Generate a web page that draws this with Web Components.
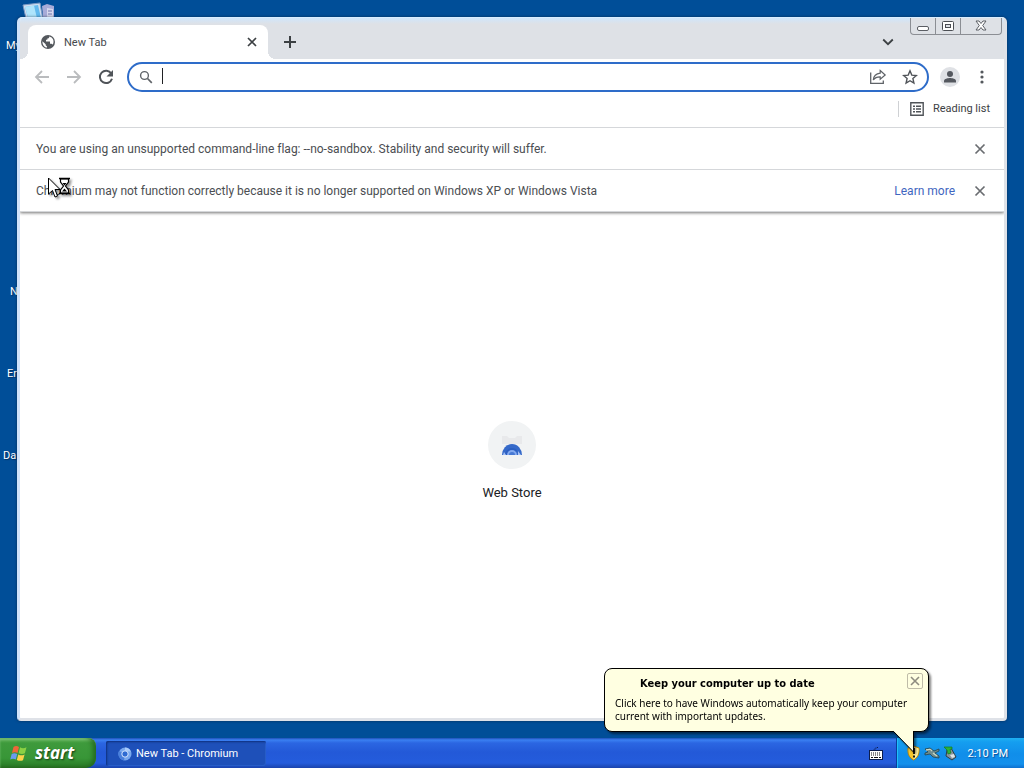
<!DOCTYPE html>
<html lang="en">
<head>
<meta charset="utf-8">
<title>Desktop</title>
<style>
html, body { margin: 0; padding: 0; }
body { min-height: 100vh; background: #004e98; font-family: Roboto, "Liberation Sans", sans-serif; font-size: 12px; line-height: 16px; overflow: hidden; }
</style>
</head>
<body>
<xp-desktop></xp-desktop>
<script>
const reset = `
  *, *::before { box-sizing: border-box; }
  button { appearance: none; border: 0; margin: 0; padding: 0; background: none; font: inherit; color: inherit; display: flex; align-items: center; justify-content: center; outline: none; }
  svg { display: block; flex: none; }
`;
function define(name, css, html) {
  const template = document.createElement('template');
  template.innerHTML = `<style>${reset}:host { box-sizing: border-box; }${css}</style>${html}`;
  customElements.define(name, class extends HTMLElement {
    constructor() {
      super();
      this.attachShadow({ mode: 'open' }).append(template.content.cloneNode(true));
    }
  });
}

define('desktop-label', `
  :host { display: block; position: absolute; color: #fff; font-size: 11px; line-height: 16px; text-shadow: 1px 1px 1px #00305f; white-space: nowrap; }
`, `<slot></slot>`);

define('caption-buttons', `
  :host { display: flex; border: 1px solid #8b8e94; border-top: 0; border-radius: 0 0 4px 4px; background: #dee1e6; height: 17px; overflow: hidden; }
  button { width: 24px; height: 16px; }
  button + button { width: 25px; border-left: 1px solid #8b8e94; }
  button:last-child { width: 41px; }
`, `
  <button aria-label="Minimize"><svg width="14" height="16" viewBox="0 0 14 16"><rect x="1.500" y="8.500" width="11" height="4" rx="1.500" fill="#fff" stroke="#5b5e64"/></svg></button>
  <button aria-label="Maximize"><svg width="14" height="16" viewBox="0 0 14 16"><rect x="1.500" y="3.500" width="11" height="9" rx="1" fill="#fff" stroke="#4b4e54"/><rect x="4.500" y="6.500" width="5" height="3" fill="#dee1e6" stroke="#4b4e54"/></svg></button>
  <button aria-label="Close"><svg width="14" height="16" viewBox="0 0 14 16"><path d="M2 3h3l2 2.500L9 3h3L8.700 7.500 12 12H9L7 9.500 5 12H2l3.300-4.500z" fill="#fff" stroke="#5b5e64"/></svg></button>
`);

define('browser-tab', `
  :host { display: flex; align-items: center; position: relative; width: 240px; height: 34px; padding: 0 8px 0 13px; background: #fff; border-radius: 8px 8px 0 0; color: #45494d; font-size: 11px; }
  :host::before, :host::after { content: ""; position: absolute; bottom: 0; width: 8px; height: 8px; }
  :host::before { left: -8px; background: radial-gradient(circle at 0 0, transparent 8px, #fff 8px); }
  :host::after { right: -8px; background: radial-gradient(circle at 100% 0, transparent 8px, #fff 8px); }
  span { flex: 1; padding: 2px 0 0 9px; }
  button { width: 16px; height: 16px; }
`, `
  <svg width="14" height="14" viewBox="0 0 14 14"><circle cx="7" cy="7" r="7" fill="#54585d"/><path d="M1.400 6.200 4.700 9.300v1L6 11.400v1.200C3 12.200 1.300 9.500 1.400 6.200zM8.300 1.500c0 1.400-.7 2-2 2v1.300H5V6.500h4v2.300h1.400c.6 0 1 .4 1.300 1 1.500-2.500 1-6.300-1.700-7.600z" fill="#fff"/></svg>
  <span><slot></slot></span>
  <button aria-label="Close tab"><svg width="10" height="10" viewBox="0 0 10 10"><path d="M1 1l8 8M9 1L1 9" stroke="#3c4043" stroke-width="1.700"/></svg></button>
`);

define('tab-strip', `
  :host { display: flex; align-items: flex-start; height: 41px; padding: 0 2px 0 8px; background: linear-gradient(#cfe6fc, #dee1e6 6px); }
  browser-tab { margin-top: 7px; }
  .plus { width: 28px; height: 34px; margin: 7px 0 0 8px; }
  .search { width: 28px; height: 34px; margin: 7px 8px 0 auto; }
`, `
  <browser-tab>New Tab</browser-tab>
  <button class="plus" aria-label="New tab"><svg width="14" height="14" viewBox="0 0 14 14"><path d="M7 1v12M1 7h12" stroke="#3c4043" stroke-width="2"/></svg></button>
  <button class="search" aria-label="Search tabs"><svg width="12" height="8" viewBox="0 0 12 8"><path d="M1.200 1.500 6 6.200l4.800-4.700" fill="none" stroke="#3c4043" stroke-width="1.800"/></svg></button>
  <caption-buttons></caption-buttons>
`);

define('address-box', `
  :host { display: flex; align-items: center; flex: 1; min-width: 0; height: 30px; border: 2px solid #2e6cc9; border-radius: 15px; background: #fff; padding: 0 1px 0 10px; }
  .caret { width: 1px; height: 16px; margin: 0 0 2px 9px; background: #202124; }
  input { flex: 1; min-width: 0; height: 24px; border: 0; padding: 0; outline: 0; background: none; font: inherit; caret-color: transparent; }
  button { width: 32px; height: 26px; }
`, `
  <svg width="14" height="14" viewBox="0 0 14 14"><circle cx="5.500" cy="5.500" r="3.900" fill="none" stroke="#5f6368" stroke-width="1.400"/><path d="M8.500 8.500l4.300 4.300" stroke="#5f6368" stroke-width="1.700"/></svg>
  <span class="caret"></span><input type="text" aria-label="Address and search bar">
  <button aria-label="Share this page"><svg width="18" height="16" viewBox="0 0 18 16"><path d="M1.700 3.500v10.800h12.600V11.500" fill="none" stroke="#5f6368" stroke-width="1.300"/><path d="M11.200 1.500l5 4.500-5 4.300V7.800C7.800 7.700 5.800 8.700 4.300 11c.3-3.500 2.700-6.300 6.900-6.800z" fill="none" stroke="#5f6368" stroke-width="1.200"/></svg></button>
  <button aria-label="Bookmark this tab"><svg width="16" height="16" viewBox="0 0 16 16"><path d="M8 1.800l1.800 4.300 4.600.4-3.500 3 1 4.600L8 11.700l-3.900 2.400 1-4.600-3.500-3 4.600-.4z" fill="none" stroke="#505459" stroke-width="1.400"/></svg></button>
`);

define('tool-bar', `
  :host { display: flex; align-items: center; height: 36px; padding: 0 6px; background: #fff; }
  button { width: 32px; height: 32px; }
  address-box { margin: 0 5px; }
  .face { width: 20px; height: 20px; border-radius: 50%; background: #dfe1e5; display: flex; justify-content: center; align-items: center; }
`, `
  <button aria-label="Back"><svg width="16" height="14" viewBox="0 0 16 14"><path d="M15 7H2M8 1L2 7l6 6" fill="none" stroke="#babcbe" stroke-width="1.800"/></svg></button>
  <button aria-label="Forward"><svg width="16" height="14" viewBox="0 0 16 14"><path d="M1 7h13M8 1l6 6-6 6" fill="none" stroke="#babcbe" stroke-width="1.800"/></svg></button>
  <button aria-label="Reload"><svg width="16" height="16" viewBox="0 0 16 16"><path d="M13.300 4.500A6.200 6.200 0 1 0 14 9.800" fill="none" stroke="#505459" stroke-width="2"/><path d="M15 1v6.500H8.500z" fill="#505459"/></svg></button>
  <address-box></address-box>
  <button aria-label="Profile"><span class="face"><svg width="14" height="14" viewBox="0 0 14 14"><circle cx="7" cy="4" r="3" fill="#54585f"/><path d="M1 12.500V11c0-2.200 4-3 6-3s6 .8 6 3v1.500z" fill="#54585f"/></svg></span></button>
  <button aria-label="Menu"><svg width="4" height="14" viewBox="0 0 4 14" fill="#54585d"><circle cx="2" cy="2" r="1.600"/><circle cx="2" cy="7" r="1.600"/><circle cx="2" cy="12" r="1.600"/></svg></button>
`);

define('bookmark-bar', `
  :host { display: flex; align-items: center; justify-content: flex-end; height: 33px; padding: 0 14px 4px 0; background: #fff; border-bottom: 1px solid #d5d7da; color: #3c4043; font-size: 11px; }
  .rule { width: 1px; height: 16px; margin-right: 11px; background: #cfd1d4; }
  button { gap: 9px; }
`, `
  <span class="rule"></span>
  <button><svg width="14" height="14" viewBox="0 0 14 14"><path d="M.8.800h12.400v12.400H.8z" fill="none" stroke="#505459" stroke-width="1.400"/><path d="M3 4.200h2M6 4.200h5M3 7h2M6 7h5M3 9.800h2M6 9.800h5" stroke="#505459" stroke-width="1.500"/></svg>Reading list</button>
`);

define('info-bar', `
  :host { display: flex; align-items: center; height: 42px; padding: 0 16px; background: #fff; border-bottom: 1px solid #d5d7da; color: #4b4e52; font-variant-ligatures: none; }
  span { flex: 1; }
  button { width: 16px; height: 16px; margin-left: 17px; }
  ::slotted(a) { color: #3f66c0; text-decoration: none; }
`, `
  <span><slot></slot></span>
  <slot name="action"></slot>
  <button aria-label="Dismiss"><svg width="12" height="12" viewBox="0 0 12 12"><path d="M1.500 1.500l9 9M10.500 1.500l-9 9" stroke="#6a6d71" stroke-width="1.700"/></svg></button>
`);

define('shortcut-tile', `
  :host { display: flex; }
  a { display: flex; flex-direction: column; align-items: center; gap: 16px; color: #202124; text-decoration: none; font-size: 13px; line-height: 16px; }
  .disc { width: 48px; height: 48px; border-radius: 50%; background: #f1f3f4; display: flex; align-items: center; justify-content: center; }
`, `
  <a href="#store"><span class="disc"><svg width="24" height="24" viewBox="0 0 24 24"><path d="M2 3h5l2 2h6l2-2h5v8H2z" fill="#e8e9eb"/><path d="M2 22a10 11 0 0 1 20 0z" fill="#3569c9"/><path d="M5 22c1-7 8-9 12-5l-2 5z" fill="#2b5fc2"/><path d="M7 22a5 5 0 0 1 10 0z" fill="#84aaf0"/><path d="M9 22a3 3 0 0 1 6 0z" fill="#4779d4"/><path d="M4 19l2 3H3zM18 18l3 4h-3z" fill="#a9c3f5"/></svg></span><slot></slot></a>
`);

define('browser-window', `
  :host { display: flex; flex-direction: column; flex: 1; position: relative; border: solid #dfe2e8; border-width: 1px 3px 3px; border-left-color: #cfe3fb; border-top-color: #d8edff; border-radius: 5px 5px 4px 4px; background: #fff; box-shadow: 0 0 3px rgba(10, 25, 45, .6); overflow: hidden; }
  header { position: relative; box-shadow: 0 1px 3px rgba(0, 0, 0, .55); }
  main { flex: 1; display: flex; align-items: center; justify-content: center; padding-bottom: 9px; }
`, `
  <header>
    <tab-strip></tab-strip>
    <tool-bar></tool-bar>
    <bookmark-bar></bookmark-bar>
    <info-bar>You are using an unsupported command-line flag: --no-sandbox. Stability and security will suffer.</info-bar>
    <info-bar>Chromium may not function correctly because it is no longer supported on Windows XP or Windows Vista<a slot="action" href="#learn">Learn more</a></info-bar>
  </header>
  <main><shortcut-tile>Web Store</shortcut-tile></main>
`);

define('balloon-tip', `
  :host { display: block; position: absolute; right: 95px; bottom: 36px; width: 325px; height: 64px; padding: 8px 10px; border: 1px solid #000; border-radius: 8px; background: #ffffe1; color: #000; filter: drop-shadow(2px 2px 1px rgba(0, 0, 0, .5)); }
  h2 { margin: 0 0 6px; padding-left: 25px; font: bold 11px/14px "DejaVu Sans Condensed", "DejaVu Sans", sans-serif; }
  p { margin: 0; font: 10px/13px "Noto Sans", sans-serif; white-space: nowrap; }
  button { position: absolute; right: 5px; top: 4px; width: 16px; height: 16px; border: 1px solid #bfbca8; border-radius: 2px; }
  .tail { position: absolute; right: 13px; top: 61px; }
`, `
  <h2>Keep your computer up to date</h2>
  <p>Click here to have Windows automatically keep your computer<br>current with important updates.</p>
  <button aria-label="Close"><svg width="10" height="10" viewBox="0 0 10 10"><path d="M1 1l8 8M9 1L1 9" stroke="#8e8c80" stroke-width="1.600"/></svg></button>
  <svg class="tail" width="22" height="24" viewBox="0 0 22 24"><path d="M0 0h20.500v22L1 1.500z" fill="#ffffe1"/><path d="M.5 1.500 20.500 22V1" fill="none" stroke="#000"/></svg>
`);

define('start-button', `
  :host { display: flex; }
  button { width: 96px; height: 30px; padding: 0 0 0 10px; justify-content: flex-start; gap: 6px; color: #fff; font: italic bold 17px/24px "Open Sans", "Noto Sans", sans-serif; text-shadow: 1px 1px 2px #163d12; border-radius: 0 8px 10px 0; background: linear-gradient(#6cba62, #3e9a3c 5px, #389637 20px, #2c8029 27px, #27691f); box-shadow: inset -5px 0 5px -2px #22681e, inset 0 2px 2px #7cc478; }
`, `
  <button><svg width="19" height="18" viewBox="0 0 19 18"><path d="M3.500 3Q6 1 9 3L7.500 9Q5 7.300 2 9z" fill="#f0663a"/><path d="M10 3.300q3 1.700 6.500 0l-1.600 6q-3 1.500-6.300-.1z" fill="#8bd044"/><path d="M1.700 10Q4.300 8.400 7.200 10l-1.400 5.500q-2.800-1.600-5.600 0z" fill="#6a9bf0"/><path d="M8.300 10.400q3 1.700 6.300 0L13 16.200q-3 1.400-6.200-.2z" fill="#fbd24a"/></svg>start</button>
`);

define('system-tray', `
  :host { display: flex; align-items: center; width: 128px; height: 30px; padding: 0 16px 0 9px; border-left: 1px solid #0a3f9c; background: linear-gradient(#1fb0f2, #159ef0 4px, #108eea 16px, #1390ec 26px, #0e70cf); box-shadow: inset 1px 0 #1fc0fa; color: #fff; font-size: 11px; }
  svg { margin-right: 3px; }
  time { margin-left: auto; padding-top: 2px; text-shadow: 1px 1px 1px #0a5098; }
`, `
  <svg width="15" height="16" viewBox="0 0 15 16"><path d="M7.500 1 13 3c.5 6-1 9.500-5.500 12C3 12.500 1.500 9 2 3z" fill="#f9c92b" stroke="#b98308"/><path d="M7.500 1.500 12.500 3.500c.3 5-1 8.500-5 11z" fill="#fff09a"/><path d="M7 3h2v6H7zM7 10.500h2v2H7z" fill="#1c1c10"/></svg>
  <svg width="16" height="16" viewBox="0 0 16 16"><path d="M1 4l5-1 4 3 5-2v2l-4 2 4 3v2l-6-1-3-3-5 1V8l3-1z" fill="#6f8c8d" stroke="#24454c" stroke-width=".8"/><path d="M2 5l4-.5L8 6M9 8l4 3" stroke="#cbd9c4" stroke-width="1.300"/></svg>
  <svg width="15" height="16" viewBox="0 0 15 16"><path d="M4 5l4-2 5 9-4 3-6-4z" fill="#88939a" stroke="#2c3d46"/><path d="M7 10l4-1 1 3-3 1z" fill="#dce3e6"/><path d="M1 2h8v2L7 4.500 8 8l-3 1-1-4z" fill="#2bb33a" stroke="#117a20" stroke-width=".7"/></svg>
  <time>2:10 PM</time>
`);

define('task-bar', `
  :host { display: flex; align-items: center; position: relative; height: 30px; background: linear-gradient(#1f50b8, #3a80f2 2px, #2b66e2 5px, #2359d8 14px, #245cdc 25px, #1a43ac); color: #fff; font-size: 11px; }
  .task { width: 160px; height: 25px; margin-left: 10px; padding: 2px 12px 0; gap: 4px; justify-content: flex-start; border-radius: 2px; background: #1e50b9; box-shadow: inset 1px 1px 2px #0e2f7c, inset -1px -1px #2a60cc; }
  .keys { margin: 0 13px 0 auto; }
`, `
  <start-button></start-button>
  <button class="task"><svg width="14" height="14" viewBox="0 0 14 14"><circle cx="7" cy="7" r="6.500" fill="#79a8ee"/><path d="M7 7 1 4A6.500 6.500 0 0 0 6 13.400z" fill="#4a80dc"/><path d="M7 .5A6.500 6.500 0 0 1 13 4.500H7z" fill="#a8cbfb"/><circle cx="7" cy="7" r="3.200" fill="#2f6bd2" stroke="#d9e8ff"/></svg>New Tab - Chromium</button>
  <svg class="keys" width="14" height="14" viewBox="0 0 14 14"><path d="M5 4.500V3h2V1.500h3" fill="none" stroke="#0a1c50" stroke-dasharray="1 1"/><rect x=".5" y="4.500" width="13" height="9" fill="#fff" stroke="#0b1d4d"/><path d="M2 7h10M2 9h10" stroke="#111" stroke-dasharray="1 1"/><path d="M2 11.500h2M5 11.500h4M10 11.500h2" stroke="#111"/></svg>
  <system-tray></system-tray>
`);

define('busy-pointer', `
  :host { display: block; position: absolute; left: 48px; top: 177px; filter: drop-shadow(2px 2px 1px rgba(0, 0, 0, .4)); pointer-events: none; }
`, `
  <svg width="24" height="22" viewBox="0 0 24 22"><path d="M.5 1v16l4-3.500L7 20l2.500-1L7 12.500h5z" fill="#fff" stroke="#000"/><path d="M12.500 2h8v3l-3 4 3 4v3h-8v-3l3-4-3-4z" fill="#fff" stroke="#000" stroke-width="1.200"/><path d="M11 1.500h11M11 16.500h11" stroke="#000" stroke-width="1.600"/><path d="M14.500 6h4l-2 2.500zM16.500 11.500 19 14.500h-5z" fill="#000"/></svg>
`);

define('xp-desktop', `
  :host { display: flex; flex-direction: column; position: relative; min-height: 100vh; overflow: hidden; background: #004e98; }
  .computer { position: absolute; left: 22px; top: 2px; }
  .space { flex: 1; display: flex; padding: 17px; }
`, `
  <svg class="computer" width="34" height="28" viewBox="0 0 34 28"><path d="M1 3 18 1l3 17-16 3z" fill="#cdddf0" stroke="#7b9ac4"/><path d="M3 5l13-2 3 13-12 3z" fill="#62b9ee"/><path d="M3 5l9-1.500 3 13-8 2z" fill="#aee4fc"/><path d="M20 4l5-2 7 2v18l-10 2z" fill="#a7abd8"/><path d="M25 6l6 1v15l-6 1z" fill="#d6d8ee"/><path d="M26 9h4M26 12h4" stroke="#6d73ad"/></svg>
  <desktop-label style="left:6px;top:38px">My</desktop-label>
  <desktop-label style="left:10px;top:284px">N</desktop-label>
  <desktop-label style="left:7px;top:366px">Er</desktop-label>
  <desktop-label style="left:3px;top:448px">Da</desktop-label>
  <div class="space"><browser-window></browser-window></div>
  <task-bar></task-bar>
  <balloon-tip></balloon-tip>
  <busy-pointer></busy-pointer>
`);
</script>
</body>
</html>
